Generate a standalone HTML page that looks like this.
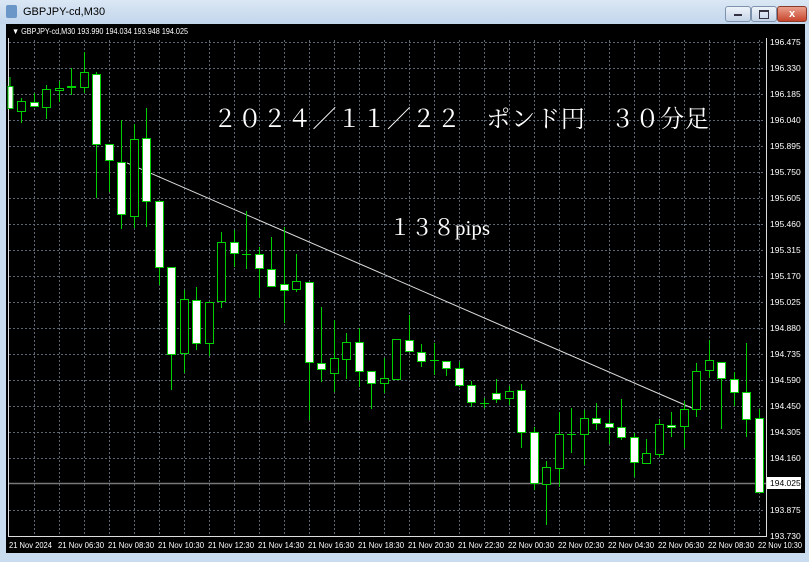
<!DOCTYPE html><html><head><meta charset="utf-8"><style>
body{margin:0;width:809px;height:562px;overflow:hidden;background:#c9dcef;font-family:"Liberation Sans",sans-serif}
.t{position:absolute;left:0;top:0;width:809px;height:24px;background:linear-gradient(#dbe7f4,#c2d6ec)}
.chart{position:absolute;left:6px;top:24px;width:799px;height:529px;background:#000}
.btn{position:absolute;top:6px;height:14px;border:1px solid #7d93ad;border-radius:3px;background:linear-gradient(#eef3fa,#c4d4e7)}
</style></head><body>
<div class="t"></div>
<div style="position:absolute;left:6px;top:5px;width:11px;height:13px;background:#6a97c8;border-radius:2px"></div>
<div style="position:absolute;left:23px;top:6px;font-size:11px;color:#000">GBPJPY-cd,M30</div>
<div class="btn" style="left:725px;width:24px"><div style="position:absolute;left:8px;top:7px;width:8px;height:2px;background:#334"></div></div>
<div class="btn" style="left:751px;width:24px"><div style="position:absolute;left:7px;top:3px;width:8px;height:6px;border:1px solid #334;border-top-width:2px"></div></div>
<div class="btn" style="left:777px;width:28px;background:linear-gradient(#e9a08c,#c8452d);border-color:#8a3a2a;color:#fff;font-size:11px;font-weight:bold;text-align:center;line-height:14px">x</div>
<div class="chart"></div>
<svg style="position:absolute;left:0;top:0" width="809" height="562" font-family="Liberation Sans, sans-serif">
<g stroke="#5d6673" stroke-dasharray="2,2" stroke-width="1">
<path d="M9 42.5H765M9 68.5H765M9 94.5H765M9 120.5H765M9 146.5H765M9 172.5H765M9 198.5H765M9 224.5H765M9 250.5H765M9 276.5H765M9 302.5H765M9 328.5H765M9 354.5H765M9 380.5H765M9 406.5H765M9 432.5H765M9 458.5H765M9 510.5H765"/>
<path d="M34.5 40V536M59.5 40V536M84.5 40V536M109.5 40V536M134.5 40V536M159.5 40V536M184.5 40V536M209.5 40V536M234.5 40V536M259.5 40V536M284.5 40V536M309.5 40V536M334.5 40V536M359.5 40V536M384.5 40V536M409.5 40V536M434.5 40V536M459.5 40V536M484.5 40V536M509.5 40V536M534.5 40V536M559.5 40V536M584.5 40V536M609.5 40V536M634.5 40V536M659.5 40V536M684.5 40V536M709.5 40V536M734.5 40V536M759.5 40V536"/>
</g>
<path d="M8 483.5H766" stroke="#777" stroke-width="1.5"/>
<path d="M8.5 38V536.5H766.5V38" stroke="#ddd" fill="none"/>
<path d="M127 163L692 408" stroke="#ddd" stroke-width="1"/>
<g stroke="#00d000" stroke-width="1">
<g fill="#fff">
<path d="M10 77V109"/><rect x="8" y="86.5" width="5" height="22"/>
<path d="M34.5 93V106"/><rect x="30.5" y="102.5" width="8" height="4"/>
<path d="M96.5 72V198"/><rect x="92.5" y="74.5" width="8" height="70"/>
<path d="M109.5 144V192"/><rect x="105.5" y="144.5" width="8" height="16"/>
<path d="M121.5 120V229"/><rect x="117.5" y="162.5" width="8" height="52"/>
<path d="M146.5 108V227"/><rect x="142.5" y="138.5" width="8" height="63"/>
<path d="M159.5 201V285"/><rect x="155.5" y="201.5" width="8" height="66"/>
<path d="M171.5 267V390"/><rect x="167.5" y="267.5" width="8" height="87"/>
<path d="M196.5 287V350"/><rect x="192.5" y="300.5" width="8" height="43"/>
<path d="M234.5 230V267"/><rect x="230.5" y="242.5" width="8" height="11"/>
<path d="M259.5 247V298"/><rect x="255.5" y="254.5" width="8" height="14"/>
<path d="M271.5 237V286"/><rect x="267.5" y="269.5" width="8" height="17"/>
<path d="M284.5 227V323"/><rect x="280.5" y="284.5" width="8" height="6"/>
<path d="M309.5 282V420"/><rect x="305.5" y="282.5" width="8" height="80"/>
<path d="M321.5 307V382"/><rect x="317.5" y="363.5" width="8" height="6"/>
<path d="M359.5 328V387"/><rect x="355.5" y="342.5" width="8" height="29"/>
<path d="M371.5 371V409"/><rect x="367.5" y="371.5" width="8" height="12"/>
<path d="M409.5 315V351"/><rect x="405.5" y="340.5" width="8" height="11"/>
<path d="M421.5 344V367"/><rect x="417.5" y="352.5" width="8" height="9"/>
<path d="M446.5 361V376"/><rect x="442.5" y="361.5" width="8" height="7"/>
<path d="M459.5 362V387"/><rect x="455.5" y="368.5" width="8" height="17"/>
<path d="M471.5 381V407"/><rect x="467.5" y="385.5" width="8" height="17"/>
<path d="M496.5 379V403"/><rect x="492.5" y="393.5" width="8" height="6"/>
<path d="M521.5 384V448"/><rect x="517.5" y="390.5" width="8" height="42"/>
<path d="M534.5 427V490"/><rect x="530.5" y="432.5" width="8" height="51"/>
<path d="M596.5 403V430"/><rect x="592.5" y="418.5" width="8" height="5"/>
<path d="M609.5 410V444"/><rect x="605.5" y="423.5" width="8" height="4"/>
<path d="M621.5 399V440"/><rect x="617.5" y="427.5" width="8" height="10"/>
<path d="M634.5 433V477"/><rect x="630.5" y="437.5" width="8" height="25"/>
<path d="M671.5 412V437"/><rect x="667.5" y="425.5" width="8" height="2"/>
<path d="M721.5 362V429"/><rect x="717.5" y="362.5" width="8" height="16"/>
<path d="M734.5 372V406"/><rect x="730.5" y="379.5" width="8" height="13"/>
<path d="M746.5 343V437"/><rect x="742.5" y="392.5" width="8" height="27"/>
<path d="M759.5 409V492"/><rect x="755.5" y="418.5" width="8" height="74"/>
</g>
<g fill="#000">
<path d="M21.5 98V123"/><rect x="17.5" y="101.5" width="8" height="10"/>
<path d="M46.5 85V119"/><rect x="42.5" y="89.5" width="8" height="18"/>
<path d="M59.5 81V102"/><rect x="55.5" y="88.5" width="8" height="2"/>
<path d="M71.5 68V95"/><rect x="67.5" y="86.5" width="8" height="1"/>
<path d="M84.5 52V93"/><rect x="80.5" y="72.5" width="8" height="15"/>
<path d="M134.5 124V228"/><rect x="130.5" y="139.5" width="8" height="77"/>
<path d="M184.5 290V373"/><rect x="180.5" y="299.5" width="8" height="54"/>
<path d="M209.5 302V356"/><rect x="205.5" y="302.5" width="8" height="41"/>
<path d="M221.5 232V308"/><rect x="217.5" y="242.5" width="8" height="59"/>
<path d="M246.5 211V269M242 254.5H251"/>
<path d="M296.5 254V292"/><rect x="292.5" y="281.5" width="8" height="8"/>
<path d="M334.5 320V392"/><rect x="330.5" y="358.5" width="8" height="15"/>
<path d="M346.5 333V379"/><rect x="342.5" y="342.5" width="8" height="17"/>
<path d="M384.5 358V393"/><rect x="380.5" y="378.5" width="8" height="5"/>
<path d="M396.5 339V379"/><rect x="392.5" y="339.5" width="8" height="40"/>
<path d="M434.5 343V375M430 360.5H439"/>
<path d="M484.5 398V408M480 403.5H489"/>
<path d="M509.5 386V405"/><rect x="505.5" y="391.5" width="8" height="7"/>
<path d="M546.5 461V525"/><rect x="542.5" y="467.5" width="8" height="17"/>
<path d="M559.5 412V487"/><rect x="555.5" y="434.5" width="8" height="34"/>
<path d="M571.5 408V453M567 434.5H576"/>
<path d="M584.5 410V465"/><rect x="580.5" y="418.5" width="8" height="16"/>
<path d="M646.5 439V463"/><rect x="642.5" y="453.5" width="8" height="10"/>
<path d="M659.5 419V457"/><rect x="655.5" y="424.5" width="8" height="30"/>
<path d="M684.5 401V448"/><rect x="680.5" y="409.5" width="8" height="17"/>
<path d="M696.5 363V417"/><rect x="692.5" y="371.5" width="8" height="38"/>
<path d="M709.5 340V378"/><rect x="705.5" y="360.5" width="8" height="10"/>
</g>
</g>
<rect x="767" y="477" width="34" height="12" fill="#fff"/>
<g font-size="8.5" fill="#fff">
<text x="12" y="34" font-size="8" textLength="176" lengthAdjust="spacingAndGlyphs">▼ GBPJPY-cd,M30  193.990 194.034 193.948 194.025</text>
<text x="770" y="45">196.475</text><text x="770" y="71">196.330</text><text x="770" y="97">196.185</text><text x="770" y="123">196.040</text><text x="770" y="149">195.895</text><text x="770" y="175">195.750</text><text x="770" y="201">195.605</text><text x="770" y="227">195.460</text><text x="770" y="253">195.315</text><text x="770" y="279">195.170</text><text x="770" y="305">195.025</text><text x="770" y="331">194.880</text><text x="770" y="357">194.735</text><text x="770" y="383">194.590</text><text x="770" y="409">194.450</text><text x="770" y="435">194.305</text><text x="770" y="461">194.160</text><text x="770" y="486" fill="#000">194.025</text><text x="770" y="513">193.875</text><text x="770" y="539">193.730</text>
</g>
<g font-size="8" fill="#fff">
<text x="9" y="548" textLength="43" lengthAdjust="spacingAndGlyphs">21 Nov 2024</text><text x="58" y="548" textLength="46" lengthAdjust="spacingAndGlyphs">21 Nov 06:30</text><text x="108" y="548" textLength="46" lengthAdjust="spacingAndGlyphs">21 Nov 08:30</text><text x="158" y="548" textLength="46" lengthAdjust="spacingAndGlyphs">21 Nov 10:30</text><text x="208" y="548" textLength="46" lengthAdjust="spacingAndGlyphs">21 Nov 12:30</text><text x="258" y="548" textLength="46" lengthAdjust="spacingAndGlyphs">21 Nov 14:30</text><text x="308" y="548" textLength="46" lengthAdjust="spacingAndGlyphs">21 Nov 16:30</text><text x="358" y="548" textLength="46" lengthAdjust="spacingAndGlyphs">21 Nov 18:30</text><text x="408" y="548" textLength="46" lengthAdjust="spacingAndGlyphs">21 Nov 20:30</text><text x="458" y="548" textLength="46" lengthAdjust="spacingAndGlyphs">21 Nov 22:30</text><text x="508" y="548" textLength="46" lengthAdjust="spacingAndGlyphs">22 Nov 00:30</text><text x="558" y="548" textLength="46" lengthAdjust="spacingAndGlyphs">22 Nov 02:30</text><text x="608" y="548" textLength="46" lengthAdjust="spacingAndGlyphs">22 Nov 04:30</text><text x="658" y="548" textLength="46" lengthAdjust="spacingAndGlyphs">22 Nov 06:30</text><text x="708" y="548" textLength="46" lengthAdjust="spacingAndGlyphs">22 Nov 08:30</text><text x="758" y="548" textLength="44" lengthAdjust="spacingAndGlyphs">22 Nov 10:30</text>
</g>
<g fill="#fff" font-family="Liberation Serif, Noto Serif CJK SC, serif">
<text x="213" y="127" font-size="24" textLength="496" lengthAdjust="spacing">２０２４／１１／２２　ポンド円　３０分足</text>
<text x="389" y="235" font-size="22">１３８<tspan font-size="21">pips</tspan></text>
</g>
</svg>
</body></html>
